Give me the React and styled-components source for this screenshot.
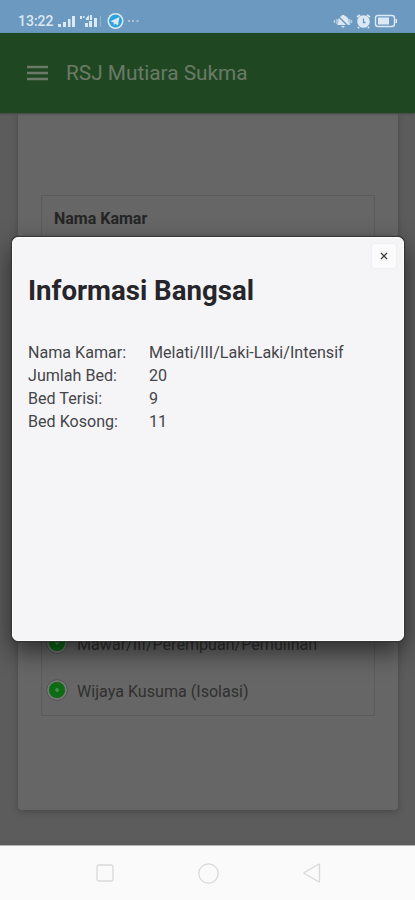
import React from "react";
import styled, { createGlobalStyle } from "styled-components";

const GlobalStyle = createGlobalStyle`
  * {
    box-sizing: border-box;
  }

  body {
    margin: 0;
    font-family: Roboto, "Liberation Sans", sans-serif;
    overflow: hidden;
  }

  svg {
    display: block;
    flex: none;
  }
`;

const Screen = styled.div`
  display: flex;
  flex-direction: column;
  position: relative;
  width: 415px;
  height: 900px;
  overflow: hidden;
`;

const StatusBar = styled.div`
  display: flex;
  justify-content: space-between;
  height: 33px;
  padding: 9px 17px 0 18px;
  background-color: #6c99bf;
  color: #dce8f3;
`;

const StatusGroup = styled.div`
  display: flex;
  align-items: center;
  height: 24px;
`;

const Clock = styled.span`
  width: 40px;
  font-size: 14px;
  font-weight: 500;
`;

const AppBar = styled.header`
  display: flex;
  align-items: center;
  height: 80px;
  padding: 0 27px;
  background-color: #1f4822;
  color: #6b7a67;
  position: relative;
  box-shadow: 0 1px 2px #444;
`;

const AppTitle = styled.h1`
  margin: 0 0 0 18px;
  font-size: 20.8px;
  font-weight: 400;
  white-space: nowrap;
`;

const Page = styled.main`
  height: 732px;
  padding: 0 17px 0 18px;
  background-color: #5c5c5c;
`;

const Card = styled.section`
  height: 697px;
  padding: 82px 23px 94px;
  border-radius: 0 0 4px 4px;
  background-color: #666;
  box-shadow: 0 2px 6px #484848;
`;

const RoomTable = styled.div`
  display: flex;
  flex-direction: column;
  justify-content: space-between;
  height: 521px;
  border: 1px solid #5b5b5b;
  color: #303030;
`;

const RoomHeader = styled.div`
  padding: 13px 12px;
  font-size: 16px;
  font-weight: 700;
  line-height: 20px;
  color: #252525;
`;

const RoomRow = styled.div`
  display: flex;
  align-items: center;
  height: 47px;
  padding: 0 0 3px 4px;
  font-size: 16.1px;
  white-space: nowrap;
`;

const RoomName = styled.span`
  margin-left: 9px;
  padding-top: 3px;
`;

const NavBar = styled.nav`
  display: flex;
  align-items: center;
  justify-content: center;
  gap: 84px;
  height: 55px;
  padding-left: 1px;
  border-top: 1px solid #b5b5b5;
  background-color: #fafafa;
`;

const Modal = styled.div`
  position: absolute;
  top: 237px;
  left: 12px;
  width: 392px;
  height: 404px;
  padding: 6px 7px 0 16px;
  border: 1px solid #fff;
  border-radius: 6px;
  background-color: #f5f5f8;
  box-shadow: 0 0 1px 1px #333, 0 10px 26px rgba(0, 0, 0, 0.58);
`;

const CloseButton = styled.button`
  display: flex;
  align-items: center;
  justify-content: center;
  width: 24px;
  height: 24px;
  margin-left: auto;
  padding: 0;
  border: none;
  border-radius: 3px;
  background-color: #fbfbfb;
  box-shadow: 0 0 2px #e3e3e6;
`;

const ModalTitle = styled.h2`
  margin: 6px 0 33px -1px;
  font-size: 27.6px;
  font-weight: 700;
  line-height: 34px;
  color: #26262a;
  white-space: nowrap;
`;

const InfoList = styled.dl`
  display: grid;
  grid-template-columns: 121px 1fr;
  margin: 0 0 0 -1px;
  font-size: 16.1px;
  line-height: 23px;
  color: #454549;
  white-space: nowrap;

  dt,
  dd {
    margin: 0;
  }
`;

const info = [
  ["Nama Kamar:", "Melati/III/Laki-Laki/Intensif"],
  ["Jumlah Bed:", "20"],
  ["Bed Terisi:", "9"],
  ["Bed Kosong:", "11"]
];

const rooms = ["Mawar/III/Perempuan/Pemulihan", "Wijaya Kusuma (Isolasi)"];

const SignalIcons = () => (
  <svg width="84" height="18" viewBox="0 0 84 18" fill="#dce8f3">
    <path d="M0 12h3v3H0zM5 10h3v5H5zM10 7h2.5v8H10zM14 4h3v11h-3z" />
    <path d="M22 4h2v3h-2zM25 4h1.5v2H25zM27 11h3v4h-3zM28 6l3-3v5h-3zM32 3h2v5h-2zM31 9h3v6h-3zM36 6h3v9h-3z" />
    <path d="M42 4h1v11h-1z" opacity=".35" />
    <circle cx="57.5" cy="9" r="8" />
    <circle cx="57.5" cy="9" r="6.5" fill="#2ca5df" />
    <path d="M52.5 9.2L61.5 5l-1.6 8.5-2.5-1.8-1.5 1.3-.3-2.4z" />
    <path d="M70 8h2v2h-2zM74 8h2v2h-2zM78.5 8h2v2h-2z" opacity=".55" />
  </svg>
);

const DeviceIcons = () => (
  <svg width="65" height="18" viewBox="0 0 65 18" fill="#dce8f3">
    <path d="M4 13c2-1 .5-5 2-7C7.5 4 9 4 9 3h2c0 1 4.5 1.5 4.5 5 0 3 .5 4 2 5zM8 14h4l-2 2z" />
    <path d="M4 3l12 12" stroke="#6c99bf" strokeWidth="1.5" />
    <path d="M1.5 8v3M4 7v5M16.5 7v5M18.5 8v3" stroke="#dce8f3" strokeWidth="1.5" opacity=".7" />
    <circle cx="30.5" cy="9.5" r="6.3" />
    <path d="M24 5l3-2M37 5l-3-2M26 15l-1 1M35 15l1 1" stroke="#dce8f3" strokeWidth="2" />
    <path d="M30.5 6.5v4h2" fill="none" stroke="#6c99bf" strokeWidth="1.3" />
    <rect x="42.5" y="3.5" width="19" height="11" rx="2.5" fill="none" stroke="#dce8f3" strokeWidth="1.4" />
    <path d="M45 5.5h11v7H45z" />
    <path d="M62.5 7h1.5v4h-1.5z" />
  </svg>
);

const MenuIcon = () => (
  <svg width="21" height="16" viewBox="0 0 21 16" stroke="currentColor" strokeWidth="2.5">
    <path d="M0 2h21M0 8h21M0 14h21" />
  </svg>
);

const ExpandIcon = () => (
  <svg width="22" height="22" viewBox="0 0 22 22">
    <circle cx="11" cy="11" r="10.2" fill="#626262" stroke="#505050" />
    <circle cx="11" cy="11" r="9" fill="none" stroke="#777b77" strokeWidth="1.6" />
    <circle cx="11" cy="11" r="8" fill="#0c6c14" />
    <path d="M11 9v4M9 11h4" stroke="#4a8c4d" strokeWidth="1.6" />
  </svg>
);

const App = () => (
  <>
    <GlobalStyle />
    <Screen>
      <StatusBar>
        <StatusGroup>
          <Clock>13:22</Clock>
          <SignalIcons />
        </StatusGroup>
        <StatusGroup>
          <DeviceIcons />
        </StatusGroup>
      </StatusBar>

      <AppBar>
        <MenuIcon />
        <AppTitle>RSJ Mutiara Sukma</AppTitle>
      </AppBar>

      <Page>
        <Card>
          <RoomTable>
            <RoomHeader>Nama Kamar</RoomHeader>
            <div>
              {rooms.map(room => (
                <RoomRow key={room}>
                  <ExpandIcon />
                  <RoomName>{room}</RoomName>
                </RoomRow>
              ))}
            </div>
          </RoomTable>
        </Card>
      </Page>

      <NavBar>
        <svg width="18" height="18" viewBox="0 0 18 18" fill="none" stroke="#d9d9d9" strokeWidth="1.3">
          <rect x="1" y="1" width="16" height="16" rx="2" />
        </svg>
        <svg width="21" height="21" viewBox="0 0 21 21" fill="none" stroke="#d9d9d9" strokeWidth="1.3">
          <circle cx="10.5" cy="10.5" r="9.7" />
        </svg>
        <svg width="18" height="20" viewBox="0 0 18 20" fill="none" stroke="#d9d9d9" strokeWidth="1.3">
          <path d="M16.5 1.7v16.6q0 .8-.8.4L1.3 10.5q-.7-.5 0-1L15.7 1.3q.8-.4.8.4z" />
        </svg>
      </NavBar>

      <Modal role="dialog">
        <CloseButton type="button" aria-label="Close">
          <svg width="8" height="8" viewBox="0 0 8 8" stroke="#3c3c3f" strokeWidth="1.3">
            <path d="M1 1l6 6M7 1L1 7" />
          </svg>
        </CloseButton>
        <ModalTitle>Informasi Bangsal</ModalTitle>
        <InfoList>
          {info.map(([label, value]) => (
            <React.Fragment key={label}>
              <dt>{label}</dt>
              <dd>{value}</dd>
            </React.Fragment>
          ))}
        </InfoList>
      </Modal>
    </Screen>
  </>
);

export default App;
